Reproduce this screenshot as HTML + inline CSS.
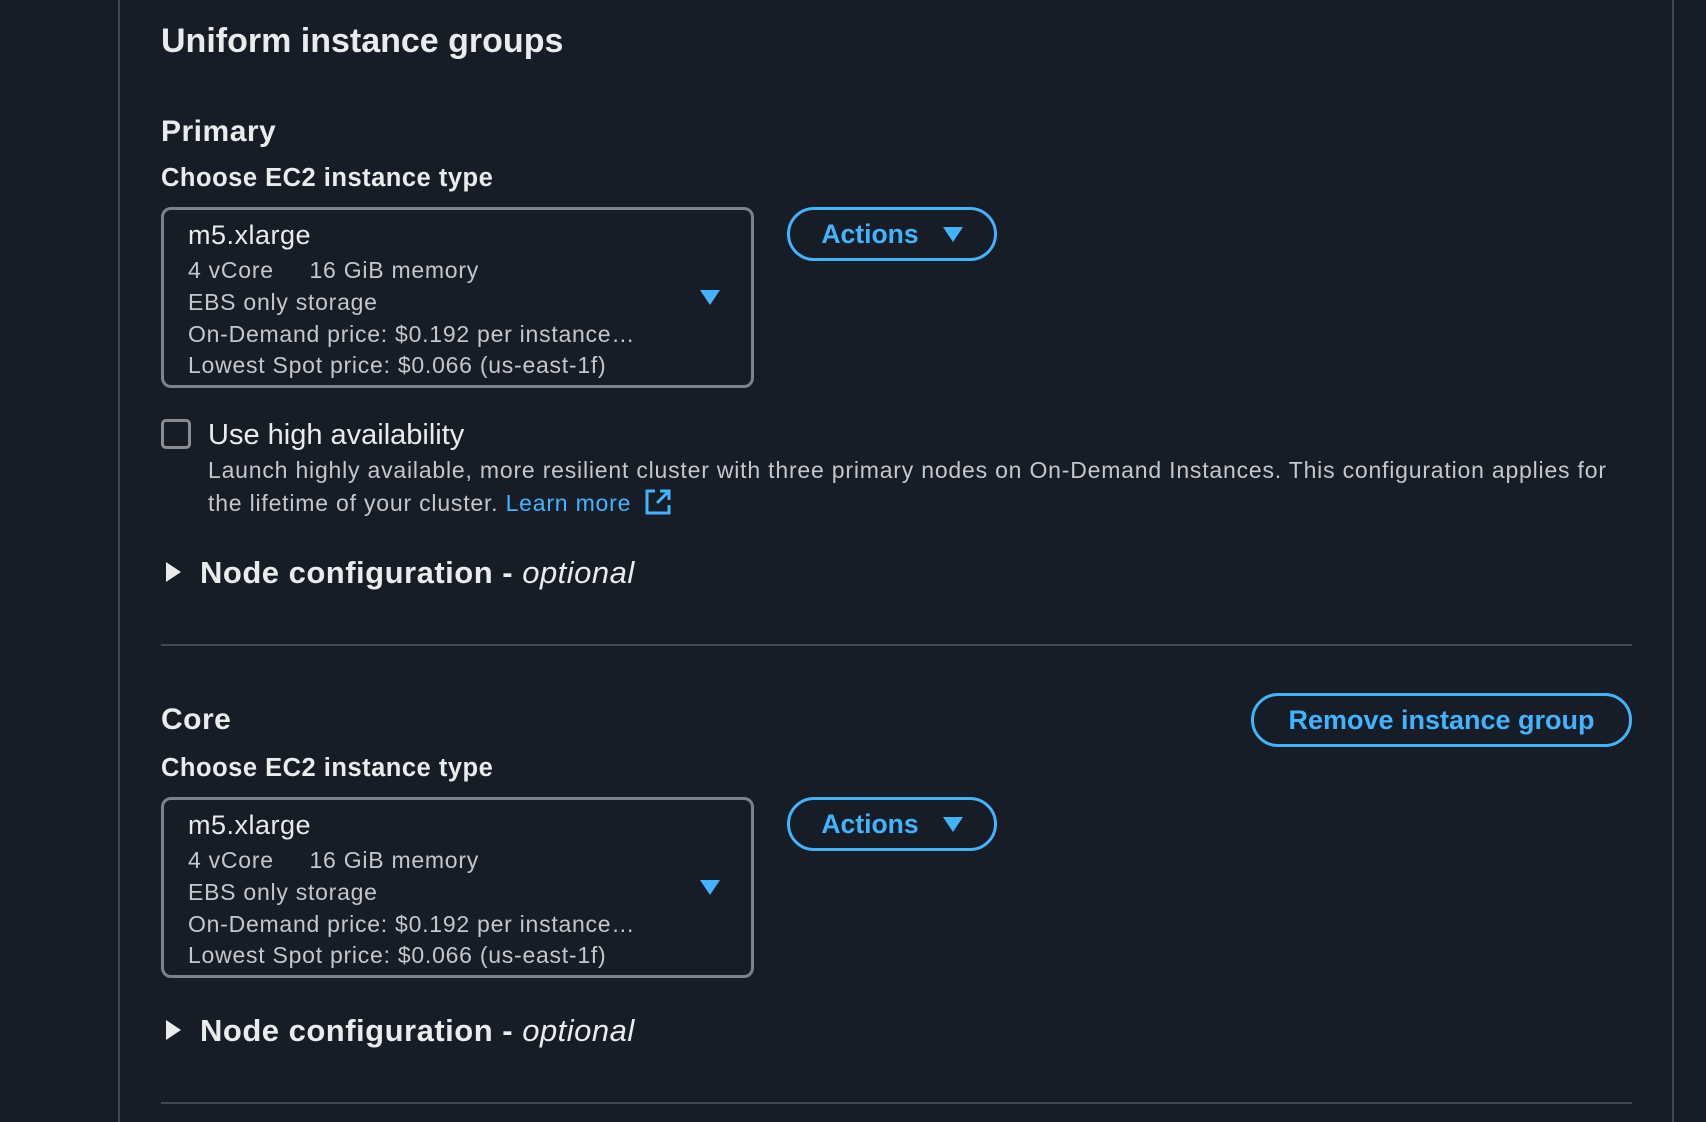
<!DOCTYPE html>
<html><head><meta charset="utf-8"><style>
*{margin:0;padding:0;box-sizing:border-box}
body{width:1706px;height:1122px;background:#161d26;position:relative;overflow:hidden;font-family:"Liberation Sans",sans-serif;color:#e9ebed}
.a{position:absolute;line-height:1;white-space:nowrap}
.vl{position:absolute;top:0;width:2px;height:1122px;background:#414750}
.hr{position:absolute;left:161px;width:1471px;height:2px;background:#414750}
.box{position:absolute;left:161px;width:593px;height:181px;border:3px solid #7d8189;border-radius:10px}
.gray{color:#c6c6cd;font-size:23px;letter-spacing:0.75px}
.btn{position:absolute;border:3px solid #42b4ff;border-radius:30px;color:#42b4ff;font-weight:bold;font-size:26.5px;display:flex;align-items:center;justify-content:center}
.tri{width:0;height:0;border-left:10px solid transparent;border-right:10px solid transparent;border-top:15px solid #42b4ff;display:inline-block}
.rtri{position:absolute;width:0;height:0;border-top:10px solid transparent;border-bottom:10px solid transparent;border-left:15px solid #e9ebed}
.h2{font-size:30px;font-weight:bold;letter-spacing:0.5px}
.nc{font-size:31px;font-weight:bold;letter-spacing:0.5px}
.lbl{font-size:25.5px;font-weight:bold;letter-spacing:0.5px}
.m5{font-size:27px;letter-spacing:0.5px}
</style></head><body>
<div class="vl" style="left:118px"></div>
<div class="vl" style="left:1672px"></div>

<div class="a" style="left:161px;top:24px;font-size:34px;font-weight:bold">Uniform instance groups</div>

<div class="a h2" style="left:161px;top:117px">Primary</div>
<div class="a lbl" style="left:161px;top:166px">Choose EC2 instance type</div>
<div class="box" style="top:207px"></div>
<div class="a m5" style="left:188px;top:222px">m5.xlarge</div>
<div class="a gray" style="left:188px;top:259px">4 vCore&nbsp;&nbsp;&nbsp;&nbsp; 16 GiB memory</div>
<div class="a gray" style="left:188px;top:291px">EBS only storage</div>
<div class="a gray" style="left:188px;top:323px">On-Demand price: $0.192 per instance…</div>
<div class="a gray" style="left:188px;top:354px">Lowest Spot price: $0.066 (us-east-1f)</div>
<div class="a" style="left:700px;top:290px"><span class="tri"></span></div>
<div class="btn" style="left:787px;top:207px;width:210px;height:54px">Actions<span class="tri" style="margin-left:24px"></span></div>

<div class="a" style="left:161px;top:419px;width:30px;height:30px;border:3px solid #8c8c94;border-radius:5px"></div>
<div class="a" style="left:208px;top:421px;font-size:29px">Use high availability</div>
<div class="a gray" style="left:208px;top:459px;letter-spacing:0.8px">Launch highly available, more resilient cluster with three primary nodes on On-Demand Instances. This configuration applies for</div>
<div class="a gray" style="left:208px;top:488px;letter-spacing:0.8px">the lifetime of your cluster. <span style="color:#42b4ff">Learn more</span>
<svg width="28" height="28" viewBox="0 0 28 28" style="vertical-align:-5px;margin-left:6px"><path d="M11 3H3v22h22v-8M16 3h9v9M25 3L13 15" fill="none" stroke="#42b4ff" stroke-width="3"/></svg></div>

<div class="rtri" style="left:166px;top:562px"></div>
<div class="a nc" style="left:200px;top:557px">Node configuration - <i style="font-weight:normal">optional</i></div>

<div class="hr" style="top:644px"></div>

<div class="a h2" style="left:161px;top:705px">Core</div>
<div class="btn" style="left:1251px;top:693px;width:381px;height:54px;font-size:27px">Remove instance group</div>
<div class="a lbl" style="left:161px;top:756px">Choose EC2 instance type</div>
<div class="box" style="top:797px"></div>
<div class="a m5" style="left:188px;top:812px">m5.xlarge</div>
<div class="a gray" style="left:188px;top:849px">4 vCore&nbsp;&nbsp;&nbsp;&nbsp; 16 GiB memory</div>
<div class="a gray" style="left:188px;top:881px">EBS only storage</div>
<div class="a gray" style="left:188px;top:913px">On-Demand price: $0.192 per instance…</div>
<div class="a gray" style="left:188px;top:944px">Lowest Spot price: $0.066 (us-east-1f)</div>
<div class="a" style="left:700px;top:880px"><span class="tri"></span></div>
<div class="btn" style="left:787px;top:797px;width:210px;height:54px">Actions<span class="tri" style="margin-left:24px"></span></div>

<div class="rtri" style="left:166px;top:1020px"></div>
<div class="a nc" style="left:200px;top:1015px">Node configuration - <i style="font-weight:normal">optional</i></div>

<div class="hr" style="top:1102px"></div>
</body></html>
